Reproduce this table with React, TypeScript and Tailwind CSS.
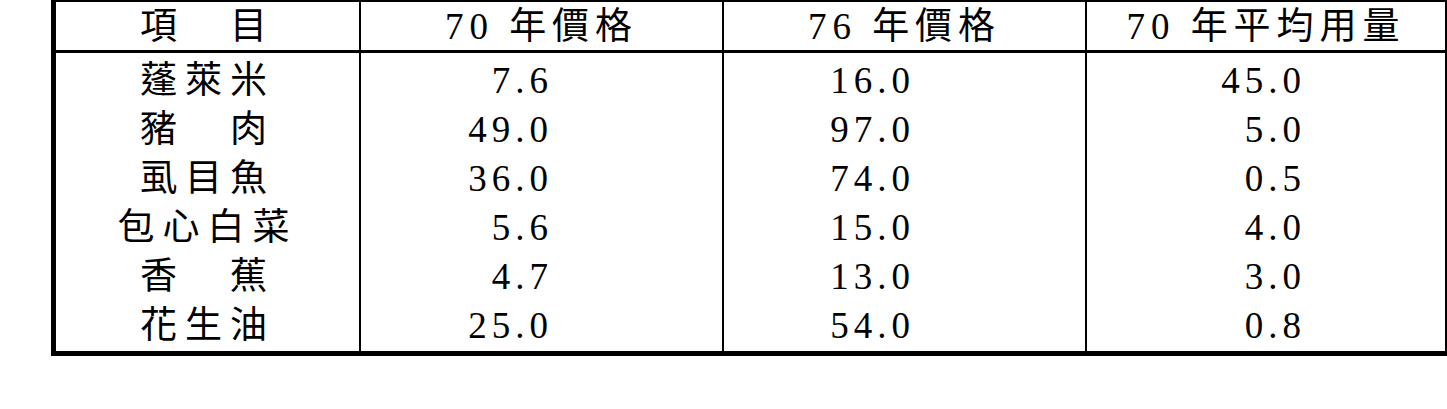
const rows = [
  { item: '蓬萊米', p70: '7.6', p76: '16.0', usage: '45.0' },
  { item: '豬　肉', p70: '49.0', p76: '97.0', usage: '5.0' },
  { item: '虱目魚', p70: '36.0', p76: '74.0', usage: '0.5' },
  { item: '包心白菜', p70: '5.6', p76: '15.0', usage: '4.0' },
  { item: '香　蕉', p70: '4.7', p76: '13.0', usage: '3.0' },
  { item: '花生油', p70: '25.0', p76: '54.0', usage: '0.8' }
]

const font = "font-['Liberation_Serif','Noto_Sans_CJK_TC',serif] text-[37px] leading-none text-black"

export default function App() {
  return (
    <div className="w-[1447px] h-[409px] bg-white">
      <div className={`ml-[51px] w-[1396px] border-l-[5px] border-t-2 border-r-2 border-b-[5px] border-black ${font}`}>
        {/* header */}
        <div className="grid grid-cols-[305px_363px_363px_358px] h-[51px] border-b-[3px] border-black">
          <div className="flex items-center justify-center border-r-2 border-black tracking-[8px]">項　目</div>
          <div className="flex items-center justify-center border-r-2 border-black tracking-[6px]">70 年價格</div>
          <div className="flex items-center justify-center border-r-2 border-black tracking-[6px]">76 年價格</div>
          <div className="flex items-center justify-center tracking-[6px]">70 年平均用量</div>
        </div>

        {/* body */}
        <div className="grid grid-cols-[305px_363px_363px_358px]">
          <div className="flex flex-col border-r-2 border-black pt-[3px] pb-[1px]">
            {rows.map((r) => (
              <div key={r.item} className="h-[49px] flex items-center justify-center tracking-[8px]">
                {r.item}
              </div>
            ))}
          </div>
          <div className="flex flex-col border-r-2 border-black pt-[3px] pb-[1px] pr-[169px]">
            {rows.map((r) => (
              <div key={r.item} className="h-[49px] flex items-center justify-end tracking-[5px]">
                {r.p70}
              </div>
            ))}
          </div>
          <div className="flex flex-col border-r-2 border-black pt-[3px] pb-[1px] pr-[170px]">
            {rows.map((r) => (
              <div key={r.item} className="h-[49px] flex items-center justify-end tracking-[5px]">
                {r.p76}
              </div>
            ))}
          </div>
          <div className="flex flex-col pt-[3px] pb-[1px] pr-[139px]">
            {rows.map((r) => (
              <div key={r.item} className="h-[49px] flex items-center justify-end tracking-[5px]">
                {r.usage}
              </div>
            ))}
          </div>
        </div>
      </div>
    </div>
  )
}
